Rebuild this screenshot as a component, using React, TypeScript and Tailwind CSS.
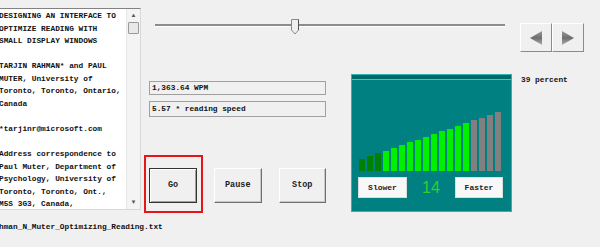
import React from "react";

const mono = "font-['Liberation_Mono','DejaVu_Sans_Mono',monospace]";

const paperLines = [
  "DESIGNING AN INTERFACE TO",
  "OPTIMIZE READING WITH",
  "SMALL DISPLAY WINDOWS",
  "",
  "TARJIN RAHMAN* and PAUL",
  "MUTER, University of",
  "Toronto, Toronto, Ontario,",
  "Canada",
  "",
  "*tarjinr@microsoft.com",
  "",
  "Address correspondence to",
  "Paul Muter, Department of",
  "Psychology, University of",
  "Toronto, Toronto, Ont.,",
  "M5S 3G3, Canada,",
];

// 18 level bars: 3 dark, 11 bright, 4 unused
const bars = Array.from({ length: 18 }, (_, i) => ({
  h: Math.round(12 + i * 2.75),
  color: i < 3 ? "bg-[#008000]" : i < 14 ? "bg-[#00f000]" : "bg-[#808080]",
}));

const WinButton = ({ label, isDefault }: { label: string; isDefault?: boolean }) => (
  <div
    className={`w-[48px] h-[35px] flex items-center justify-center bg-[#f0f0f0] text-[8.5px] font-bold text-[#222] ${mono} ${
      isDefault
        ? "border border-[#333] shadow-[inset_1px_1px_0_#fff,inset_-1px_-1px_0_#a0a0a0]"
        : "border border-t-white border-l-white border-r-[#707070] border-b-[#707070] shadow-[inset_-1px_-1px_0_#c8c8c8]"
    }`}
  >
    {label}
  </div>
);

const Arrow = ({ dir }: { dir: "left" | "right" }) => (
  <div className="w-[32px] h-[29px] flex items-center justify-center bg-[#f0f0f0] border border-t-white border-l-white border-r-[#8a8a8a] border-b-[#8a8a8a]">
    <svg width="14" height="16" viewBox="0 0 14 16">
      <defs>
        <linearGradient id={`g-${dir}`} x1="0" y1="0" x2="0" y2="1">
          <stop offset="0" stopColor="#9a9a9a" />
          <stop offset="0.5" stopColor="#6e6e6e" />
          <stop offset="1" stopColor="#b0b0b0" />
        </linearGradient>
      </defs>
      <path d={dir === "left" ? "M1 8 L13 1 L13 15 Z" : "M13 8 L1 1 L1 15 Z"} fill={`url(#g-${dir})`} />
    </svg>
  </div>
);

export default function App() {
  return (
    <div className="w-[600px] h-[247px] bg-[#f0f0f0] flex overflow-hidden">
      {/* left: document text + file name */}
      <div className="w-[141px] shrink-0 flex flex-col">
        <div className="mt-[8px] ml-[-6px] w-[147px] h-[202px] flex bg-white border border-t-[#828282] border-l-[#828282] border-r-[#d8d8d8] border-b-[#d8d8d8]">
          <div className={`flex-1 pl-[4px] pt-[1px] overflow-hidden text-[7.8px] leading-[12.55px] text-[#111] font-bold ${mono} whitespace-pre`}>
            {paperLines.map((l, i) => (
              <div key={i} className="h-[12.55px]">{l}</div>
            ))}
          </div>
          {/* scrollbar */}
          <div className="w-[14px] flex flex-col bg-[#f4f4f4] border-l border-[#e6e6e6]">
            <div className="h-[13px] flex items-center justify-center text-[6px] text-[#555]">▲</div>
            <div className="mx-[1px] h-[12px] bg-[#e8e8e8] border border-[#9a9a9a] rounded-[1px]" />
            <div className="flex-1" />
            <div className="h-[13px] flex items-center justify-center text-[6px] text-[#555]">▼</div>
          </div>
        </div>
        <div className={`mt-[12px] ml-[-1px] text-[7.8px] font-bold text-[#111] whitespace-nowrap ${mono}`}>
          hman_N_Muter_Optimizing_Reading.txt
        </div>
      </div>

      {/* right side */}
      <div className="flex-1 flex flex-col">
        {/* slider + arrows */}
        <div className="h-[56px] flex items-start">
          <div className="ml-[14px] mt-[18px] w-[350px] h-[17px] relative">
            <div className="absolute left-0 right-0 top-[6px] h-[3px] border-t-2 border-[#8c8c8c] border-b border-b-white" />
            <svg className="absolute left-[135px] top-[1px]" width="10" height="16" viewBox="0 0 10 16">
              <path d="M1.5 0.5 H8.5 V11 L5 15 L1.5 11 Z" fill="#f0f0f0" stroke="#8a8a8a" />
              <path d="M8.5 0.5 V11" stroke="#555" />
            </svg>
          </div>
          <div className="ml-[15px] mt-[23px] flex">
            <Arrow dir="left" />
            <Arrow dir="right" />
          </div>
        </div>

        <div className="flex items-start">
          {/* readouts and transport buttons */}
          <div className="ml-[8px] w-[177px] flex flex-col">
            <div className={`mt-[25px] h-[14px] border border-[#a0a0a0] bg-[#f0f0f0] pl-[2px] text-[7.8px] leading-[12px] font-bold text-[#111] ${mono}`}>
              1,363.64 WPM
            </div>
            <div className={`mt-[6px] h-[16px] border border-[#a0a0a0] bg-[#f0f0f0] pl-[2px] text-[7.8px] leading-[14px] font-bold text-[#111] ${mono}`}>
              5.57 * reading speed
            </div>
            <div className="mt-[51px] flex gap-[17px]">
              <div className="relative">
                <WinButton label="Go" isDefault />
                <div className="absolute left-[-5px] top-[-13px] w-[59px] h-[58px] border-2 border-[#e8141c]" />
              </div>
              <WinButton label="Pause" />
              <WinButton label="Stop" />
            </div>
          </div>

          {/* speed meter */}
          <div className="ml-[25px] mt-[18px] w-[161px] h-[138px] bg-[#008080] border border-[#2ab4b4] flex flex-col">
            <div className="h-[5px] bg-[#006a6a] border-b border-[#44c4c4]" />
            <div className="mt-[91px] ml-[7px] h-[0px] relative">
              <div className="absolute bottom-0 left-0 flex items-end gap-[2px]">
                {bars.map((b, i) => (
                  <div key={i} className={`w-[6px] ${b.color}`} style={{ height: b.h }} />
                ))}
              </div>
            </div>
            <div className="mt-[6px] ml-[6px] flex items-center">
              <div className={`w-[49px] h-[21px] bg-[#f8f8f8] border border-[#dcdcdc] flex items-center justify-center text-[8px] font-bold text-[#222] ${mono}`}>
                Slower
              </div>
              <div className="w-[48px] text-center text-[16px] leading-none text-[#2fd02f] font-['Liberation_Sans',sans-serif]">
                14
              </div>
              <div className={`w-[48px] h-[21px] bg-[#f8f8f8] border border-[#dcdcdc] flex items-center justify-center text-[8px] font-bold text-[#222] ${mono}`}>
                Faster
              </div>
            </div>
          </div>

          <div className={`ml-[9px] mt-[19px] text-[7.8px] font-bold text-[#111] ${mono}`}>39 percent</div>
        </div>
      </div>
    </div>
  );
}
